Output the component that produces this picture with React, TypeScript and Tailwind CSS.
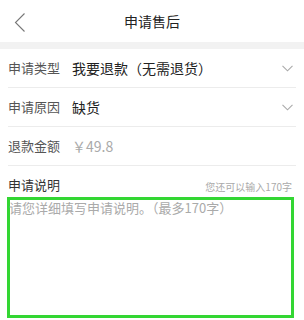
const font = { fontFamily: '"Noto Sans CJK SC", "Liberation Sans", sans-serif' };

function Down() {
  return (
    <svg width="11" height="7" viewBox="0 0 11 7" className="mr-[3px]">
      <polyline points="0.5,0.8 5.5,5.8 10.5,0.8" fill="none" stroke="#aaa" strokeWidth="1.1" />
    </svg>
  );
}

function Row({ label, value, muted, arrow }: { label: string; value: string; muted?: boolean; arrow?: boolean }) {
  return (
    <div className="flex h-[39px] items-center border-b border-[#ececec]">
      <span className="w-[64px] text-[13px] text-[#555]">{label}</span>
      <span className={`flex-1 text-[14px] ${muted ? 'text-[#aaa]' : 'text-[#222]'}`}>{value}</span>
      {arrow && <Down />}
    </div>
  );
}

export default function App() {
  return (
    <div className="h-[320px] w-[304px] overflow-hidden bg-white" style={font}>
      {/* header */}
      <div className="relative flex h-[42px] items-center justify-center">
        <svg width="12" height="20" viewBox="0 0 12 20" className="absolute left-[14px] top-[13px]">
          <polyline points="10.5,0.5 1.5,9.5 10.5,18.5" fill="none" stroke="#777" strokeWidth="1.1" />
        </svg>
        <span className="text-[14px] text-[#222]">申请售后</span>
      </div>
      <div className="h-[7px] bg-[#f2f2f2]" />

      <div className="px-[8px]">
        <Row label="申请类型" value="我要退款（无需退货）" arrow />
        <Row label="申请原因" value="缺货" arrow />
        <Row label="退款金额" value="￥49.8" muted />

        <div className="flex h-[31px] items-end justify-between pb-[3px]">
          <span className="text-[13px] text-[#333]">申请说明</span>
          <span className="mr-[4px] text-[10px] text-[#aaa]">您还可以输入170字</span>
        </div>
      </div>

      <div className="ml-[7px] mr-[10px] h-[121px] border-[3px] border-[#33d633] bg-white">
        <div className="-ml-[1px] -mt-[2px] text-[13px] text-[#aaa]">请您详细填写申请说明。（最多170字）</div>
      </div>
    </div>
  );
}
